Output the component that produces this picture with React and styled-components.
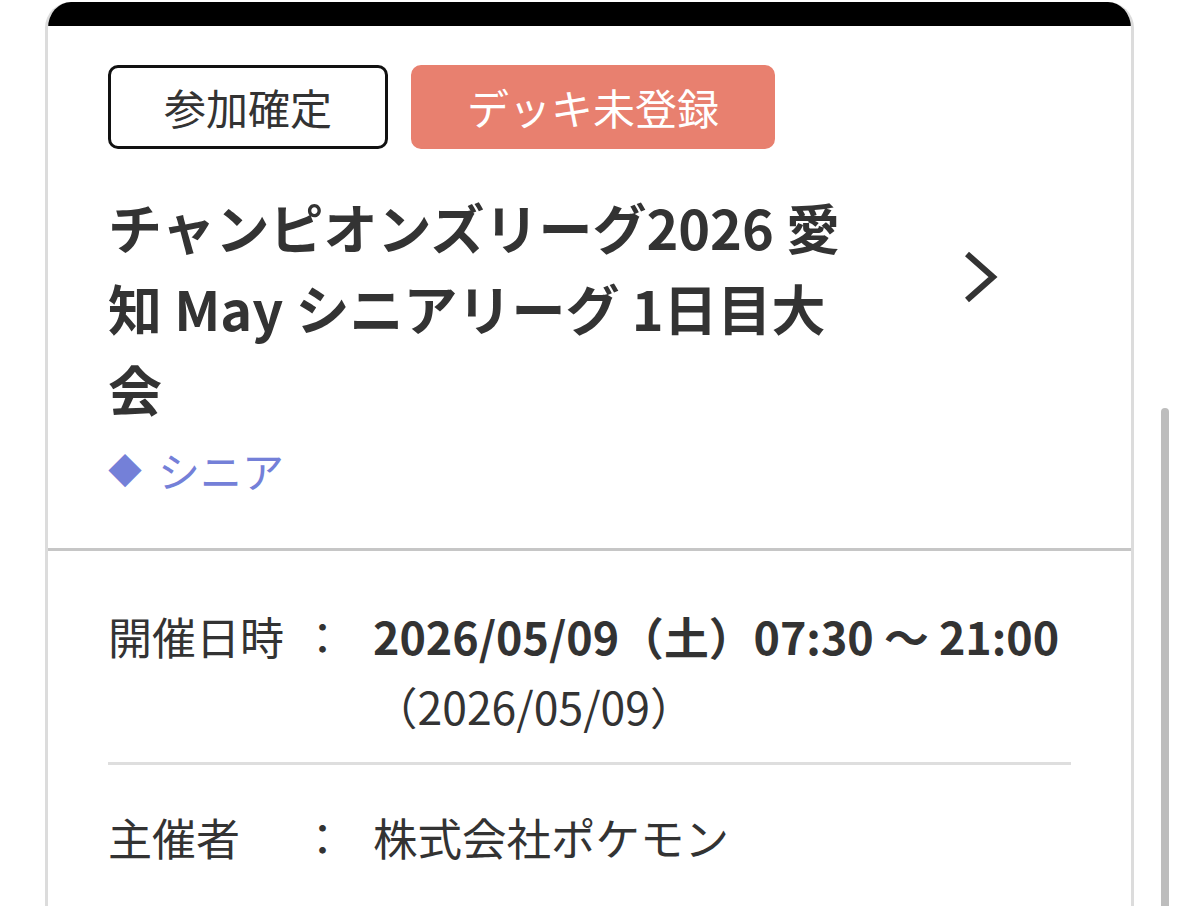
import React from "react";
import styled, { createGlobalStyle } from "styled-components";

const GlobalStyle = createGlobalStyle`
  html, body {
    margin: 0;
    padding: 0;
    background: #ffffff;
    overflow: hidden;
  }
  body {
    font-family: "Noto Sans CJK JP", "Noto Sans", sans-serif;
    color: #333333;
  }
`;

const Page = styled.div`
  position: relative;
  width: 1179px;
  height: 906px;
  padding: 2px 0 0 45px;
  box-sizing: border-box;
  overflow: hidden;
`;

const Card = styled.div`
  width: 1089px;
  box-sizing: border-box;
  border: 3px solid #dcdcdc;
  border-top: none;
  border-radius: 26px 26px 0 0;
  overflow: hidden;
  background: #fff;
  min-height: 1000px;
`;

const TopBar = styled.div`
  height: 24px;
  background: #000;
`;

const Summary = styled.div`
  padding: 39px 60px 47px;
`;

const Badges = styled.div`
  display: flex;
  gap: 23px;
`;

const Badge = styled.span`
  display: inline-flex;
  align-items: center;
  justify-content: center;
  box-sizing: border-box;
  height: 84px;
  padding: 0 53px;
  border-radius: 10px;
  border: 3px solid ${(p) => (p.$filled ? "#e8806f" : "#111")};
  background: ${(p) => (p.$filled ? "#e8806f" : "#fff")};
  color: ${(p) => (p.$filled ? "#fff" : "#333")};
  font-size: 42px;
  line-height: 1;
`;

const TitleRow = styled.div`
  display: flex;
  align-items: flex-start;
  margin-top: 37px;
`;

const Title = styled.h2`
  margin: 0;
  width: 752px;
  font-size: 54px;
  font-weight: 700;
  line-height: 81px;
  color: #333;
`;

const Chevron = styled.svg`
  flex: none;
  margin: 63px 0 0 102px;
  width: 36px;
  height: 56px;
`;

const Category = styled.div`
  margin-top: 9px;
  font-size: 42px;
  line-height: 63px;
  color: #7480d8;
  display: flex;
  align-items: center;
  gap: 16px;
`;

const Diamond = styled.span`
  font-size: 34px;
`;

const Divider = styled.div`
  border-top: 3px solid #c6c6c6;
`;

const Info = styled.div`
  padding: 13px 60px 0;
`;

const InfoRow = styled.div`
  display: flex;
  align-items: flex-start;
  padding: 38px 0 20px;
  border-bottom: ${(p) => (p.$last ? "none" : "3px solid #dedede")};
`;

const Label = styled.div`
  flex: 0 0 192px;
  font-size: 44px;
  line-height: 68px;
`;

const Colon = styled.div`
  flex: 0 0 45px;
  text-align: center;
  font-size: 44px;
  line-height: 68px;
  margin-right: 28px;
`;

const Value = styled.div`
  display: flex;
  flex-direction: column;
`;

const ValueLine = styled.div`
  font-size: ${(p) => (p.$bold ? "44.8px" : "44.5px")};
  line-height: ${(p) => (p.$sub ? "72px" : "68px")};
  font-weight: ${(p) => (p.$bold ? 700 : 400)};
  white-space: nowrap;
`;

const ScrollThumb = styled.div`
  position: absolute;
  left: 1161px;
  top: 408px;
  width: 8px;
  height: 560px;
  border-radius: 4px;
  background: #bdbdbd;
`;

export default function App() {
  return (
    <>
      <GlobalStyle />
      <Page>
        <Card>
          <TopBar />
          <Summary>
            <Badges>
              <Badge>参加確定</Badge>
              <Badge $filled>デッキ未登録</Badge>
            </Badges>
            <TitleRow>
              <Title>チャンピオンズリーグ2026 愛知 May シニアリーグ 1日目大会</Title>
              <Chevron viewBox="0 0 36 56" aria-hidden="true">
                <polyline
                  points="5,5 31,28 5,51"
                  fill="none"
                  stroke="#333"
                  strokeWidth="6"
                  strokeLinecap="butt"
                  strokeLinejoin="miter"
                />
              </Chevron>
            </TitleRow>
            <Category>
              <Diamond>◆</Diamond>
              <span>シニア</span>
            </Category>
          </Summary>
          <Divider />
          <Info>
            <InfoRow>
              <Label>開催日時</Label>
              <Colon>：</Colon>
              <Value>
                <ValueLine $bold>2026/05/09（土）07:30 ～ 21:00</ValueLine>
                <ValueLine $sub>（2026/05/09）</ValueLine>
              </Value>
            </InfoRow>
            <InfoRow $last>
              <Label>主催者</Label>
              <Colon>：</Colon>
              <Value>
                <ValueLine>株式会社ポケモン</ValueLine>
              </Value>
            </InfoRow>
          </Info>
        </Card>
        <ScrollThumb />
      </Page>
    </>
  );
}
